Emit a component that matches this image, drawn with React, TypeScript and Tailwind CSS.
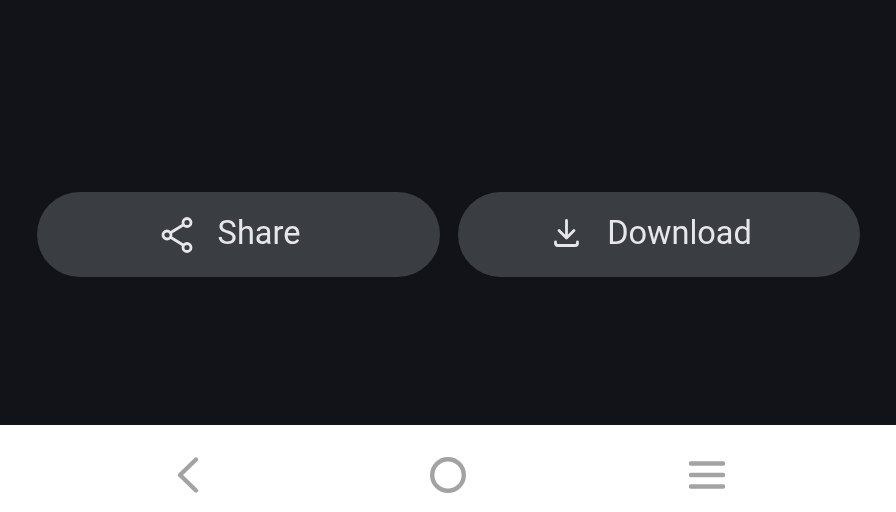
export default function App() {
  return (
    <div className="flex h-[512px] w-[896px] flex-col overflow-hidden bg-white font-['Roboto',sans-serif] blur-[0.5px]">
      <main className="flex h-[425px] items-start gap-[18px] bg-[#111318] pl-[37px] pt-[192px]">
        <button className="flex h-[85px] w-[403px] items-center justify-center gap-[25px] rounded-full bg-[#3a3d42] pr-[16px] text-[32.5px] text-[#e6e7eb]">
          <svg width="32" height="36" viewBox="0 0 32 36" fill="none" stroke="#e6e7eb" strokeWidth="2.8">
            <circle cx="6" cy="18" r="4" />
            <circle cx="26" cy="5.5" r="4" />
            <circle cx="26" cy="30.5" r="4" />
            <path d="M9.5 15.8 22.5 7.7M9.5 20.2l13 8.1" />
          </svg>
          <span className="mb-[2px]">Share</span>
        </button>
        <button className="flex h-[85px] w-[402px] items-center justify-center gap-[25px] rounded-full bg-[#3a3d42] pr-[14px] text-[32.5px] text-[#e6e7eb]">
          <svg className="mb-[3px]" width="30" height="30" viewBox="0 0 30 30" fill="none" stroke="#e6e7eb" strokeWidth="2.8" strokeLinecap="round" strokeLinejoin="round">
            <path d="M14.5 2.5V20M7 12.5l7.5 7.5 7.5-7.5" />
            <path d="M3.5 24v1a2.5 2.5 0 0 0 2.5 2.5h17a2.5 2.5 0 0 0 2.5-2.5v-1" />
          </svg>
          <span className="mb-[2px]">Download</span>
        </button>
      </main>
      <nav className="flex h-[87px] items-center bg-white px-[60px] pt-[13px]">
        <div className="flex flex-1 justify-center">
          <svg className="mr-[4px]" width="28" height="40" viewBox="0 0 28 40" fill="none" stroke="#a3a3a3" strokeWidth="4.4" strokeLinecap="round" strokeLinejoin="round">
            <path d="M23 4.5 7 20l16 15.5" />
          </svg>
        </div>
        <div className="flex flex-1 justify-center">
          <svg width="36" height="36" viewBox="0 0 36 36" fill="none" stroke="#a3a3a3" strokeWidth="4.4">
            <circle cx="18" cy="18" r="15.8" />
          </svg>
        </div>
        <div className="flex flex-1 justify-center">
          <svg width="36" height="36" viewBox="0 0 36 36" fill="none" stroke="#a3a3a3" strokeWidth="4.4" strokeLinecap="round">
            <path d="M2 6.5h32M2 18h32M2 29.5h32" />
          </svg>
        </div>
      </nav>
    </div>
  );
}
